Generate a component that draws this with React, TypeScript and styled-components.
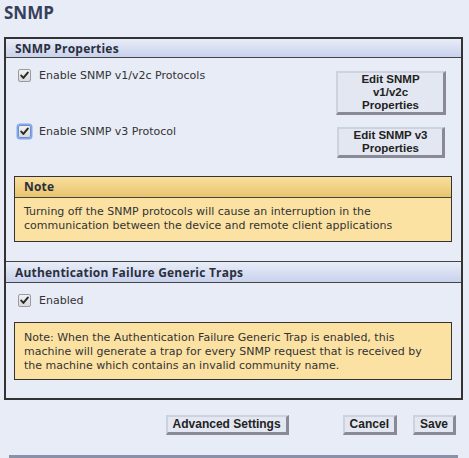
import React from "react";
import styled, { createGlobalStyle, css } from "styled-components";

const Global = createGlobalStyle`
  html, body { margin: 0; padding: 0; background: #e8ecf7; }
  body { font-family: "DejaVu Sans", "Open Sans", sans-serif; color: #333; }
  #root { min-height: 458px; }
`;

const Page = styled.div`
  padding: 0 6px 0 4px;
  height: 458px;
  box-sizing: border-box;
  display: flex;
  flex-direction: column;
`;

const Title = styled.h1`
  margin: 0;
  height: 37px;
  padding-top: 2px;
  box-sizing: border-box;
  font-family: "Open Sans", sans-serif;
  font-weight: 700;
  font-size: 17px;
  line-height: 22px;
  color: #35405a;
`;

const Panel = styled.div`
  border: 2px solid #333;
  width: 459px;
  box-sizing: border-box;
`;

const SectionHeader = styled.div<{ $top?: boolean }>`
  height: 19px;
  box-sizing: border-box;
  padding-left: 9px;
  background: linear-gradient(#e9edf8, #c8d2ec);
  border-bottom: 1px solid #444;
  ${(p) =>
    p.$top &&
    css`
      border-top: 1px solid #444;
      height: 22px;
    `}
  font-family: "Open Sans", sans-serif;
  font-weight: 700;
  font-size: 12px;
  letter-spacing: 0.2px;
  color: #2b2f3c;
  display: flex;
  align-items: center;
`;

const SectionBody = styled.div<{ $pt: number; $pb: number }>`
  padding: ${(p) => p.$pt}px 8px ${(p) => p.$pb}px 8px;
`;

const Row = styled.div<{ $mb?: number }>`
  display: flex;
  align-items: flex-start;
  justify-content: space-between;
  margin-bottom: ${(p) => p.$mb ?? 0}px;
`;

const CheckLabel = styled.label`
  display: flex;
  align-items: center;
  gap: 8px;
  padding-left: 4px;
  font-size: 11px;
  line-height: 13px;
  color: #333;
`;

const Box = styled.span<{ $focus?: boolean }>`
  width: 11px;
  height: 11px;
  border: 1px solid #9a9aa2;
  border-radius: 2px;
  background: linear-gradient(#f2f2f2, #d9d9dc);
  display: inline-flex;
  align-items: center;
  justify-content: center;
  flex: none;
  ${(p) =>
    p.$focus &&
    css`
      box-shadow: 0 0 0 1.5px #7fa9ec;
      border-color: #6f8fc9;
    `}
`;

const ButtonCol = styled.div`
  width: 120px;
  margin-right: 2px;
  display: flex;
  justify-content: center;
`;

const Btn = styled.button<{ $w?: number }>`
  font-family: "Liberation Sans", Arial, sans-serif;
  font-weight: 700;
  font-size: 12px;
  line-height: 12px;
  color: #222;
  background: #e3e7f1;
  border-style: solid;
  border-width: 2px 3px 3px 2px;
  border-color: #cdd2de #8a8a96 #8a8a96 #cdd2de;
  padding: 0 5px;
  margin: 0;
  ${(p) =>
    p.$w &&
    css`
      width: ${p.$w}px;
    `}
  box-sizing: border-box;
  text-align: center;
`;

const EditBtn = styled(Btn)`
  margin-top: 2px;
  padding: 0 4px;
  font-size: 11.5px;
  line-height: 13px;
`;

const Note = styled.div<{ $mt: number }>`
  margin: ${(p) => p.$mt}px 1px 0 0;
  border: 1px solid #333;
  background: #fbe2a3;
`;

const NoteHead = styled.div`
  height: 21px;
  box-sizing: border-box;
  padding-left: 9px;
  background: linear-gradient(#f9dfa0, #e8c46c);
  border-bottom: 1px solid #444;
  font-family: "Open Sans", sans-serif;
  font-weight: 700;
  font-size: 12px;
  letter-spacing: 0.2px;
  line-height: 20px;
  color: #2b2f3c;
`;

const NoteText = styled.div<{ $pad: string }>`
  padding: ${(p) => p.$pad};
  font-size: 11px;
  line-height: 14px;
  color: #333;
  white-space: nowrap;
`;

const Footer = styled.div`
  margin-top: 15px;
  display: flex;
  justify-content: flex-end;
  gap: 16px;
  padding-right: 7px;
`;

const FootBtn = styled(Btn)`
  height: 20px;
  line-height: 15px;
`;

const AdvBtn = styled(FootBtn)`
  margin-right: 38px;
`;

const Bar = styled.div`
  margin-top: auto;
  margin-left: 5px;
  width: 449px;
  height: 3px;
  background: #8b91a9;
`;

const Check = ({ focus }: { focus?: boolean }) => (
  <Box $focus={focus}>
    <svg width="9" height="9" viewBox="0 0 9 9">
      <path
        d="M1.3 4.6 L3.4 6.9 L7.8 1.6"
        fill="none"
        stroke="#2a2a2a"
        strokeWidth="2"
        strokeLinecap="round"
        strokeLinejoin="round"
      />
    </svg>
  </Box>
);

export default function App() {
  return (
    <>
      <Global />
      <Page>
        <Title>SNMP</Title>
        <Panel>
          <SectionHeader>SNMP Properties</SectionHeader>
          <SectionBody $pt={11} $pb={19}>
            <Row $mb={10}>
              <CheckLabel>
                <Check />
                Enable SNMP v1/v2c Protocols
              </CheckLabel>
              <ButtonCol>
                <EditBtn $w={110}>
                  Edit SNMP
                  <br />
                  v1/v2c
                  <br />
                  Properties
                </EditBtn>
              </ButtonCol>
            </Row>
            <Row>
              <CheckLabel>
                <Check focus />
                Enable SNMP v3 Protocol
              </CheckLabel>
              <ButtonCol>
                <EditBtn $w={108}>
                  Edit SNMP v3
                  <br />
                  Properties
                </EditBtn>
              </ButtonCol>
            </Row>
            <Note $mt={18}>
              <NoteHead>Note</NoteHead>
              <NoteText $pad="7px 9px 8px 9px">
                Turning off the SNMP protocols will cause an interruption in the
                <br />
                communication between the device and remote client applications
              </NoteText>
            </Note>
          </SectionBody>
          <SectionHeader $top>Authentication Failure Generic Traps</SectionHeader>
          <SectionBody $pt={11} $pb={18}>
            <Row>
              <CheckLabel>
                <Check />
                Enabled
              </CheckLabel>
            </Row>
            <Note $mt={15}>
              <NoteText $pad="8px 9px 6px 9px">
                Note: When the Authentication Failure Generic Trap is enabled, this
                <br />
                machine will generate a trap for every SNMP request that is received by
                <br />
                the machine which contains an invalid community name.
              </NoteText>
            </Note>
          </SectionBody>
        </Panel>
        <Footer>
          <AdvBtn>Advanced Settings</AdvBtn>
          <FootBtn>Cancel</FootBtn>
          <FootBtn>Save</FootBtn>
        </Footer>
        <Bar />
      </Page>
    </>
  );
}
